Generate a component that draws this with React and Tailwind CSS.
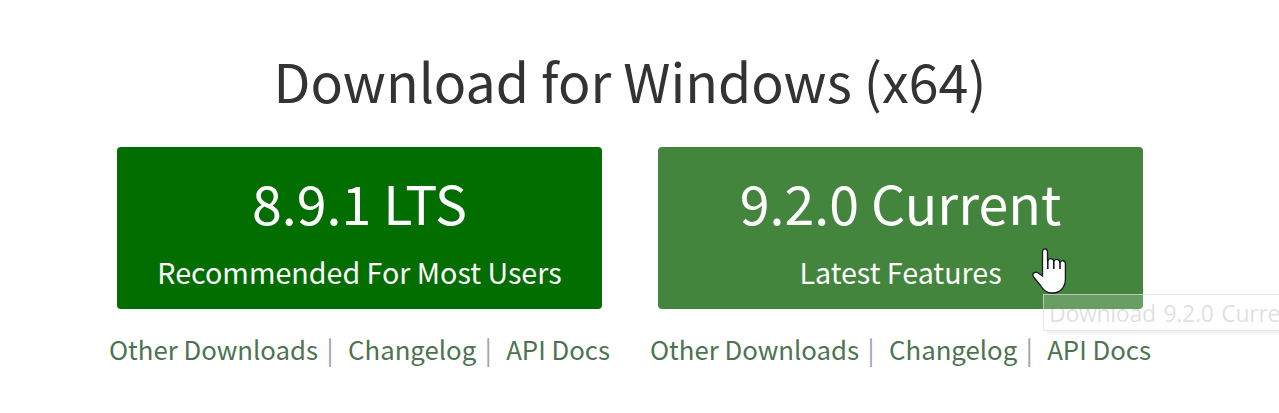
const source = "font-['Noto_Sans_CJK_SC',sans-serif]";

function Links() {
  return (
    <nav className="mt-5 flex h-10 w-[501px] items-center justify-between whitespace-nowrap text-[25.75px] leading-10 text-[#4d7350]">
      <a>Other Downloads</a>
      <span className="-ml-1.5 text-[#a0a0a8]">|</span>
      <a>Changelog</a>
      <span className="-ml-1.5 text-[#a0a0a8]">|</span>
      <a>API Docs</a>
    </nav>
  );
}

function Download({ version, note, color }) {
  return (
    <section className="flex w-[541px] flex-col items-center">
      <a className={`flex h-[162px] w-[485px] flex-col items-center whitespace-nowrap rounded-[4px] pt-[25px] text-white ${color}`}>
        <span className="text-[53.7px] leading-[60px]">{version}</span>
        <span className="mt-5 text-[28.65px] leading-10">{note}</span>
      </a>
      <Links />
    </section>
  );
}

function Pointer() {
  return (
    <svg className="absolute left-[1031px] top-[247px]" width="36" height="48" viewBox="0 0 36 48">
      <path
        d="M11.5 29 V5 C11.5 .8 16.5 .8 16.5 5 V14 C17.5 10.5 22.5 10.8 22.8 14.5 C23.8 11.2 28.6 11.6 29 16 C30 12.5 34.4 13.2 34.4 17 V32 C34.4 40 29.5 46 21.5 46 C15 46 12.5 43 9.5 38.5 L3 30.5 C-.5 26.5 4.5 23.5 8 26.5 Z"
        fill="#fff"
        stroke="#151923"
        strokeWidth="1.3"
      />
      <path d="M16.8 13 V22 M22.8 14 V22 M29 15 V22" fill="none" stroke="#151923" strokeWidth="1.6" />
    </svg>
  );
}

export default function App() {
  return (
    <main className={`relative h-[413px] w-[1279px] overflow-hidden bg-white ${source}`}>
      <h1 className="mr-[19px] whitespace-nowrap pt-[50px] text-center text-[53.7px] font-normal leading-[60px] text-[#333]">
        Download for Windows (x64)
      </h1>
      <div className="mt-[37px] flex pl-[89px]">
        <Download version="8.9.1 LTS" note="Recommended For Most Users" color="bg-[#026e00]" />
        <Download version="9.2.0 Current" note="Latest Features" color="bg-[#43853d]" />
      </div>
      <div className="absolute left-[1043px] top-[294px] h-[37px] w-[236px] whitespace-nowrap border border-r-0 border-[#dcdcdc]/70 bg-white/20 pl-[5px] font-['Open_Sans',sans-serif] text-[23px] leading-[37px] tracking-[-0.28px] text-[#808080]/25 shadow-[3px_3px_3px_rgba(0,0,0,0.06)] [word-spacing:2px]">
        Download 9.2.0 Curre
      </div>
      <Pointer />
    </main>
  );
}
